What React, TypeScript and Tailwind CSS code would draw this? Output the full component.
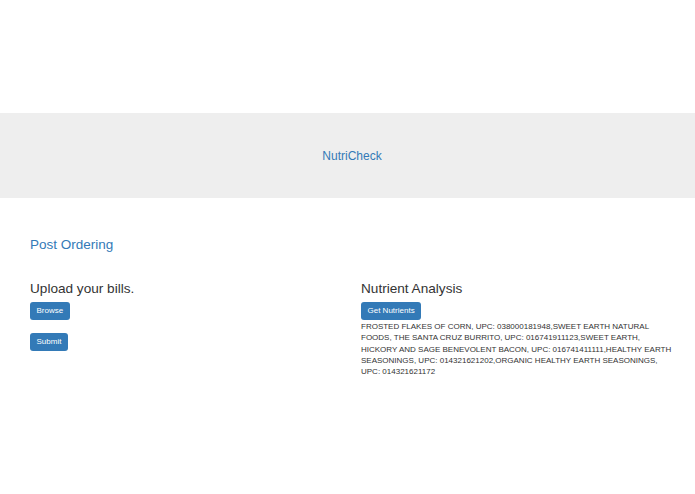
import React from "react";

export default function App() {
  return (
    <div className="w-[695px] h-[494px] bg-white overflow-hidden" style={{ fontFamily: '"Liberation Sans", Arial, sans-serif' }}>
      <div className="h-[113px]" />
      <div className="h-[85px] bg-[#eeeeee] flex items-center justify-center pl-[9px]">
        <span className="text-[12px] text-[#337ab7] leading-none">NutriCheck</span>
      </div>
      <div className="pl-[30px] pr-[20px]">
        <div className="pt-[39px] text-[13.5px] leading-[16px] text-[#337ab7]">Post Ordering</div>
        <div className="mt-[27px] grid grid-cols-[331px_1fr]">
          <div className="flex flex-col items-start">
            <div className="text-[13.6px] leading-[17px] text-[#333333]">Upload your bills.</div>
            <button className="mt-[5px] h-[18px] px-[6.5px] rounded-[3px] bg-[#337ab7] text-white text-[8px] leading-none">Browse</button>
            <button className="mt-[13px] h-[18px] px-[6.5px] rounded-[3px] bg-[#337ab7] text-white text-[8px] leading-none">Submit</button>
          </div>
          <div className="flex flex-col items-start">
            <div className="text-[13.6px] leading-[17px] text-[#333333]">Nutrient Analysis</div>
            <button className="mt-[5px] h-[18px] px-[6.5px] rounded-[3px] bg-[#337ab7] text-white text-[8px] leading-none">Get Nutrients</button>
            <p className="mt-[1px] text-[8px] leading-[11.3px] text-[#333333]">
              FROSTED FLAKES OF CORN, UPC: 038000181948,SWEET EARTH NATURAL FOODS, THE SANTA CRUZ BURRITO, UPC: 016741911123,SWEET EARTH, HICKORY AND SAGE BENEVOLENT BACON, UPC: 016741411111,HEALTHY EARTH SEASONINGS, UPC: 014321621202,ORGANIC HEALTHY EARTH SEASONINGS, UPC: 014321621172
            </p>
          </div>
        </div>
      </div>
    </div>
  );
}
